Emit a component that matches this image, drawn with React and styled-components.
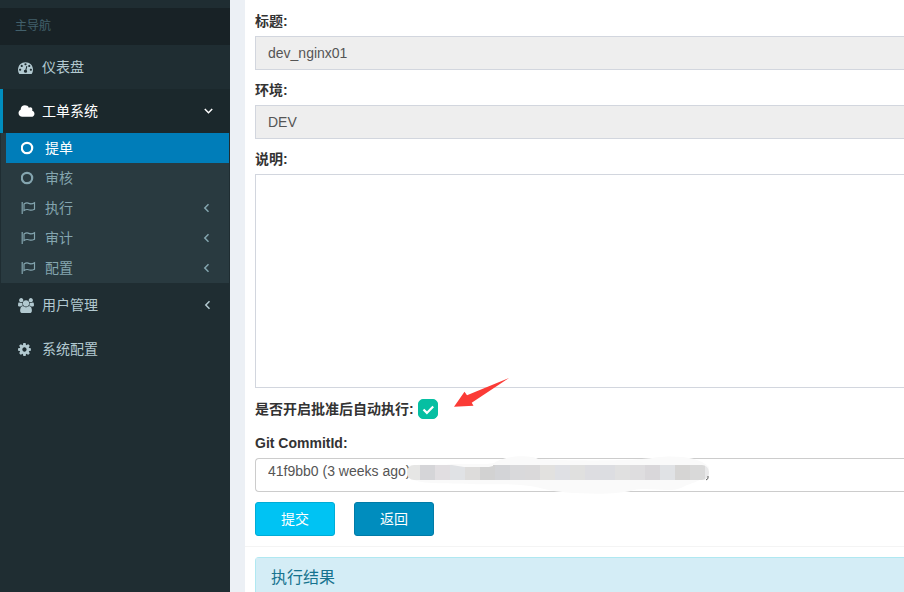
import React from "react";
import styled, { createGlobalStyle, css } from "styled-components";

const GlobalStyle = createGlobalStyle`
  *, *::before, *::after { box-sizing: border-box; }
  html, body, #root { height: 100%; }
  body {
    margin: 0;
    overflow: hidden;
    background: #ecf0f5;
    color: #333;
    font-family: "Liberation Sans", "Noto Sans CJK SC", sans-serif;
    font-size: 14px;
    line-height: 20px;
  }
`;

const Layout = styled.div`
  display: flex;
  height: 100%;
  overflow: hidden;
`;

const Sidebar = styled.nav`
  flex: 0 0 230px;
  padding-top: 8px;
  background: #1f2d32;
`;

const NavHeader = styled.div`
  padding: 8px 15px 9px;
  background: #182226;
  color: #42606b;
  font-size: 12px;
`;

const NavList = styled.ul`
  margin: 0;
  padding: 0;
  list-style: none;
`;

const NavLink = styled.a`
  display: flex;
  align-items: center;
  height: 44px;
  padding: 0 17px 0 15px;
  border-left: 3px solid ${(p) => (p.$active ? "#008dbe" : "transparent")};
  background: ${(p) => (p.$active ? "#1b282c" : "transparent")};
  color: ${(p) => (p.$active ? "#fff" : "#b2c9d0")};
  text-decoration: none;
`;

const NavText = styled.span`
  flex: 1;
`;

const IconSlot = styled.span`
  display: flex;
  flex: 0 0 24px;
`;

const SubMenu = styled.ul`
  margin: 0 1px;
  padding: 0 0 0 5px;
  list-style: none;
  background: #293a40;
`;

const SubLink = styled.a`
  display: flex;
  align-items: center;
  height: 30px;
  padding: 0 17px 0 15px;
  color: #84a5af;
  text-decoration: none;
  ${(p) =>
    p.$active &&
    css`
      background: #007db9;
      color: #fff;
    `}
`;

const Content = styled.main`
  flex: 1;
  min-width: 0;
  padding-left: 15px;
`;

const Box = styled.section`
  min-height: 100%;
  background: #fff;
`;

const Form = styled.form`
  display: flex;
  flex-direction: column;
  gap: 10px;
  padding: 11px 0 10px 10px;
`;

const Field = styled.div`
  display: flex;
  flex-direction: column;
  gap: 5px;
`;

const Label = styled.label`
  font-weight: 700;
`;

const control = css`
  display: block;
  width: 100%;
  margin: 0;
  border: 1px solid #d2d6de;
  border-right: 0;
  border-radius: 0;
  outline: 0;
  padding: 6px 12px;
  background: #fff;
  color: #555;
  font: inherit;
`;

const TextInput = styled.input`
  ${control}
  height: 34px;
  &:disabled { background: #eee; }
`;

const TextArea = styled.textarea`
  ${control}
  height: 214px;
  resize: none;
`;

const SelectWrap = styled.div`
  position: relative;
`;

const Select = styled.select`
  ${control}
  appearance: none;
  height: 34px;
  padding: 2px 12px 10px;
  border-color: #ccc;
  border-radius: 4px 0 0 4px;
`;

const Smudge = styled.svg`
  position: absolute;
  top: -2px;
  left: 151px;
  pointer-events: none;
`;

const CheckRow = styled.div`
  display: flex;
  align-items: center;
  gap: 4px;
  height: 25px;
  padding-bottom: 4px;
`;

const CheckHolder = styled.span`
  position: relative;
  display: flex;
`;

const CheckBox = styled.input`
  appearance: none;
  width: 20px;
  height: 20px;
  margin: 0;
  border: 1px solid #c8ced2;
  border-radius: 5px;
  &:checked { border-color: #06bfa2; background: #06bfa2; }
`;

const CheckMark = styled.svg`
  position: absolute;
  inset: 0;
  pointer-events: none;
`;

const Arrow = styled.svg`
  position: absolute;
  left: 35px;
  top: -22px;
  pointer-events: none;
`;

const Actions = styled.div`
  display: flex;
  gap: 19px;
`;

const Button = styled.button`
  width: 80px;
  height: 34px;
  padding: 0;
  border: 1px solid ${(p) => (p.$primary ? "#00acd6" : "#007ba7")};
  border-radius: 3px;
  background: ${(p) => (p.$primary ? "#00c3f3" : "#008dbe")};
  color: #fff;
  font: inherit;
`;

const Results = styled.div`
  padding: 10px 0 0 10px;
  border-top: 1px solid #f4f4f4;
`;

const Panel = styled.div`
  border: 1px solid #b0e8f1;
  border-right: 0;
  border-radius: 4px 0 0 0;
`;

const PanelTitle = styled.h3`
  margin: 0;
  padding: 10px 15px 15px;
  background: #d4edf6;
  color: #16738f;
  font-size: 16px;
  font-weight: 400;
`;

const glyphs = {
  dashboard: {
    width: 1792,
    d: "M384 1152q0-53-37.5-90.5t-90.5-37.5-90.5 37.5-37.5 90.5 37.5 90.5 90.5 37.5 90.5-37.5 37.5-90.5zm192-448q0-53-37.5-90.5t-90.5-37.5-90.5 37.5-37.5 90.5 37.5 90.5 90.5 37.5 90.5-37.5 37.5-90.5zm428 481l101-382q6-26-7.5-48.5t-38.5-29.5-48 6.5-30 39.5l-101 382q-60 5-107 43.5t-63 98.5q-20 77 20 146t117 89 146-20 89-117q16-60-6-117t-72-91zm660-33q0-53-37.5-90.5t-90.5-37.5-90.5 37.5-37.5 90.5 37.5 90.5 90.5 37.5 90.5-37.5 37.5-90.5zm-640-640q0-53-37.5-90.5t-90.5-37.5-90.5 37.5-37.5 90.5 37.5 90.5 90.5 37.5 90.5-37.5 37.5-90.5zm448 192q0-53-37.5-90.5t-90.5-37.5-90.5 37.5-37.5 90.5 37.5 90.5 90.5 37.5 90.5-37.5 37.5-90.5zm320 448q0 261-141 483-19 29-54 29h-1402q-35 0-54-29-141-221-141-483 0-182 71-348t191-286 286-191 348-71 348 71 286 191 191 286 71 348z",
  },
  cloud: {
    width: 2048,
    d: "M1984 1152q0 159-112.5 271.5t-271.5 112.5h-1088q-185 0-316.5-131.5t-131.5-316.5q0-132 71-241.5t187-163.5q-2-28-2-43 0-212 150-362t362-150q158 0 286.5 88t187.5 230q70-62 166-62 106 0 181 75t75 181q0 75-41 138 129 30 213 134.5t84 239.5z",
  },
  users: {
    width: 1920,
    d: "M593 896q-162 5-265 128h-134q-82 0-138-40.5t-56-118.5q0-353 124-353 6 0 43.5 21t97.5 42.5 119 21.5q67 0 133-23-5 37-5 66 0 139 81 256zm1071 637q0 120-73 189.5t-194 69.5h-874q-121 0-194-69.5t-73-189.5q0-53 3.5-103.5t14-109 26.5-108.5 43-97.5 62-81 85.5-53.5 111.5-20q10 0 43 21.5t73 48 107 48 135 21.5 135-21.5 107-48 73-48 43-21.5q61 0 111.5 20t85.5 53.5 62 81 43 97.5 26.5 108.5 14 109 3.5 103.5zm-1024-1277q0 106-75 181t-181 75-181-75-75-181 75-181 181-75 181 75 75 181zm704 384q0 159-112.5 271.5t-271.5 112.5-271.5-112.5-112.5-271.5 112.5-271.5 271.5-112.5 271.5 112.5 112.5 271.5zm576 225q0 78-56 118.5t-138 40.5h-134q-103-123-265-128 81-117 81-256 0-29-5-66 66 23 133 23 59 0 119-21.5t97.5-42.5 43.5-21q124 0 124 353zm-128-609q0 106-75 181t-181 75-181-75-75-181 75-181 181-75 181 75 75 181z",
  },
  cog: {
    width: 1664,
    x: 128,
    d: "M1152 896q0-106-75-181t-181-75-181 75-75 181 75 181 181 75 181-75 75-181zm512-109v222q0 12-8 23t-20 13l-185 28q-19 54-39 91 35 50 107 138 10 12 10 25t-9 23q-27 37-99 108t-94 71q-12 0-26-9l-138-108q-44 23-91 38-16 136-29 186-7 28-36 28h-222q-14 0-24.5-8.5t-11.5-21.5l-28-184q-49-16-90-37l-141 107q-10 9-25 9-14 0-25-11-126-114-165-168-7-10-7-23 0-12 8-23 15-21 51-66.5t54-70.5q-27-50-41-99l-183-27q-13-2-21-12.5t-8-23.5v-222q0-12 8-23t19-13l186-28q14-46 39-92-40-57-107-138-10-12-10-24 0-10 9-23 26-36 98.5-107.5t94.5-71.5q13 0 26 10l138 107q44-23 91-38 16-136 29-186 7-28 36-28h222q14 0 24.5 8.5t11.5 21.5l28 184q49 16 90 37l142-107q9-9 24-9 13 0 25 10 129 119 165 170 7 8 7 22 0 12-8 23-15 21-51 66.5t-54 70.5q26 50 41 98l183 28q13 2 21 12.5t8 23.5z",
  },
};

function Glyph({ name }) {
  const { width, x = 0, d } = glyphs[name];
  return (
    <svg width={Math.round(width / 122)} height="15" viewBox={`${x} 0 ${width} 1792`} fill="currentColor" aria-hidden="true">
      <path d={d} />
    </svg>
  );
}

function Ring() {
  return (
    <svg width="14" height="14" viewBox="0 0 14 14" fill="none" stroke="currentColor" strokeWidth="2.2" aria-hidden="true">
      <circle cx="6" cy="7" r="5.2" />
    </svg>
  );
}

function Flag() {
  return (
    <svg width="15" height="14" viewBox="0 0 15 14" fill="none" stroke="currentColor" strokeWidth="1.2" aria-hidden="true">
      <path d="M1.200 1v12" />
      <path d="M3 3C6 1 7 2.100 8.800 2.700c1.700.5 3.200-.1 4.700-1v6.500c-2 1.100-3.300 1.300-4.900.8C6.700 8.200 5.600 7.900 3 9.500z" />
    </svg>
  );
}

function Chevron({ down }) {
  return (
    <svg width="9" height="10" viewBox="0 0 9 10" fill="none" stroke="currentColor" strokeWidth="1.5" aria-hidden="true">
      <path d={down ? "M.8 3l3.700 3.700L8.200 3" : "M5.500 1.300L1.800 5l3.700 3.700"} />
    </svg>
  );
}

function NavItem({ icon, text, chevron, active, children }) {
  return (
    <li>
      <NavLink href="#" $active={active}>
        <IconSlot><Glyph name={icon} /></IconSlot>
        <NavText>{text}</NavText>
        {chevron && <Chevron down={active} />}
      </NavLink>
      {children}
    </li>
  );
}

function SubItem({ text, active, folder }) {
  return (
    <li>
      <SubLink href="#" $active={active}>
        <IconSlot>{folder ? <Flag /> : <Ring />}</IconSlot>
        <NavText>{text}</NavText>
        {folder && <Chevron />}
      </SubLink>
    </li>
  );
}

const blurTiles = ["#e6e6e5", "#d5d5d8", "#e1dee1", "#e0e2e5", "#dddcdb", "#d2d2d2", "#d3d4d7", "#d9d9db", "#dad9da", "#e2e1df", "#dfe0e4", "#e0e0df", "#dddde1", "#dcdde1", "#e0e0e0", "#dedddf", "#d9d7da", "#e0e2e5", "#d6d5d4", "#d9d9d9", "#e8e8e9"];

function RedactedText() {
  return (
    <Smudge width="306" height="38" viewBox="0 0 306 38" aria-hidden="true">
      <path d="M3 9C30 8 70 10 88 7C99-1 125-1 132 3C160 5 228 5 246 2C266-1 292 0 303 11C303 25 285 26 275 32C263 37 242 31 228 34C210 40 157 38 138 33C110 26 90 29 65 28C40 27 10 29 3 21z" fill="#fafafa" />
      <clipPath id="smudge-edge"><rect x="1" y="9" width="302" height="15" rx="7" /></clipPath>
      <g clipPath="url(#smudge-edge)">
        {blurTiles.map((fill, i) => (
          <rect key={i} x={i * 15 - 1} y="9" width="15" height="15" fill={fill} />
        ))}
      </g>
      <path d="M40 8h47v2l-4 1H58z" fill="#fafafa" />
      <path d="M302 20q1 3-2 4" stroke="#555" fill="none" />
    </Smudge>
  );
}

export default function App() {
  return (
    <>
      <GlobalStyle />
      <Layout>
        <Sidebar>
          <NavHeader>主导航</NavHeader>
          <NavList>
            <NavItem icon="dashboard" text="仪表盘" />
            <NavItem icon="cloud" text="工单系统" chevron active>
              <SubMenu>
                <SubItem text="提单" active />
                <SubItem text="审核" />
                <SubItem text="执行" folder />
                <SubItem text="审计" folder />
                <SubItem text="配置" folder />
              </SubMenu>
            </NavItem>
            <NavItem icon="users" text="用户管理" chevron />
            <NavItem icon="cog" text="系统配置" />
          </NavList>
        </Sidebar>
        <Content>
          <Box>
            <Form onSubmit={(e) => e.preventDefault()}>
              <Field>
                <Label htmlFor="title">标题:</Label>
                <TextInput id="title" defaultValue="dev_nginx01" disabled />
              </Field>
              <Field>
                <Label htmlFor="env">环境:</Label>
                <TextInput id="env" defaultValue="DEV" disabled />
              </Field>
              <Field>
                <Label htmlFor="description">说明:</Label>
                <TextArea id="description" />
              </Field>
              <CheckRow>
                <Label htmlFor="auto">是否开启批准后自动执行:</Label>
                <CheckHolder>
                  <CheckBox id="auto" type="checkbox" defaultChecked />
                  <CheckMark width="20" height="20" viewBox="0 0 20 20" fill="none" stroke="#fff" strokeWidth="2.2" aria-hidden="true">
                    <path d="M5.500 10.500l3.400 3.400L15.200 7.500" />
                  </CheckMark>
                  <Arrow width="58" height="32" viewBox="0 0 58 32" aria-hidden="true">
                    <path d="M1 29.700L11.500 14.800l2.500 3.500L56 1 18.700 25.800l1.800 3z" fill="#fb3b36" />
                  </Arrow>
                </CheckHolder>
              </CheckRow>
              <Field>
                <Label htmlFor="commit">Git CommitId:</Label>
                <SelectWrap>
                  <Select id="commit">
                    <option>41f9bb0 (3 weeks ago)</option>
                  </Select>
                  <RedactedText />
                </SelectWrap>
              </Field>
              <Actions>
                <Button type="submit" $primary>提交</Button>
                <Button type="button">返回</Button>
              </Actions>
            </Form>
            <Results>
              <Panel>
                <PanelTitle>执行结果</PanelTitle>
              </Panel>
            </Results>
          </Box>
        </Content>
      </Layout>
    </>
  );
}
